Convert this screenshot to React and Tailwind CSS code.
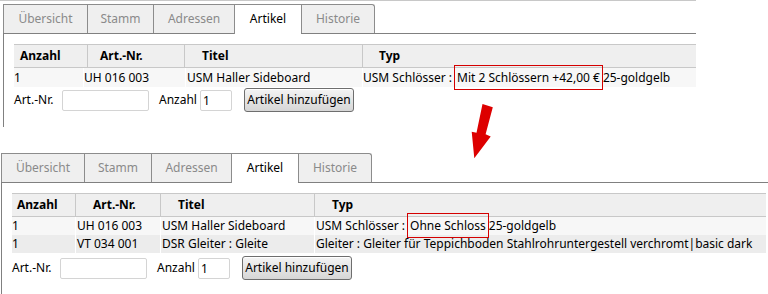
const tabNames = ["Übersicht", "Stamm", "Adressen", "Artikel", "Historie"];

function Tabs({ widths }) {
  return (
    <div className="flex h-[29px] items-start">
      {tabNames.map((name, i) => {
        const active = name === "Artikel";
        const last = i === tabNames.length - 1;
        return (
          <div
            key={name}
            style={{ width: widths[i] }}
            className={
              "flex items-center justify-center border-l border-t border-[#8c8c8c] " +
              (last ? "border-r rounded-tr-[3px] " : "") +
              (active
                ? "relative z-10 h-[30px] bg-white text-black"
                : "h-[29px] bg-[#efefef] text-[#8a8a8a]")
            }
          >
            <span className="-mt-px">{name}</span>
          </div>
        );
      })}
    </div>
  );
}

function Header({ cols }) {
  return (
    <div className="flex h-[24px] border-y border-[#c8c8c8] bg-[#efefef] font-bold">
      {cols.map((c, i) => (
        <div
          key={c.label}
          style={c.w ? { width: c.w, paddingLeft: c.p } : { paddingLeft: c.p }}
          className={
            "flex items-center " + (i > 0 ? "border-l border-[#c8c8c8] " : "") + (c.w ? "shrink-0" : "flex-1")
          }
        >
          {c.label}
        </div>
      ))}
    </div>
  );
}

function Row({ cells, widths, pads, bg, h }) {
  return (
    <div className={"flex " + bg} style={{ height: h }}>
      {cells.map((c, i) => (
        <div
          key={i}
          style={widths[i] ? { width: widths[i], paddingLeft: pads[i] } : { paddingLeft: pads[i] }}
          className={
            "flex items-center whitespace-nowrap " +
            (i > 0 ? "border-l border-white " : "") +
            (widths[i] ? "shrink-0" : "flex-1")
          }
        >
          {c}
        </div>
      ))}
    </div>
  );
}

function AddRow({ top }) {
  return (
    <div className={"flex items-center " + top}>
      <span className="w-[48px]">Art.-Nr.</span>
      <input className="h-[21px] w-[87px] rounded-[2px] border border-[#d4d4d4] bg-white" />
      <span className="ml-[10px] w-[41px]">Anzahl</span>
      <input
        defaultValue="1"
        className="h-[21px] w-[32px] rounded-[2px] border border-[#d4d4d4] bg-white px-[2px] text-[12px]"
      />
      <button className="ml-[12px] h-[24px] w-[110px] rounded-[3px] border border-[#6e6e6e] bg-gradient-to-b from-[#f4f4f4] to-[#d6d6d6] text-[12px] text-black shadow-[inset_0_1px_0_#fff]">
        Artikel hinzufügen
      </button>
    </div>
  );
}

function Box({ children }) {
  return (
    <span className="ml-[2px] border border-[#d40000] px-[2px] py-[3px]">{children}</span>
  );
}

export default function App() {
  return (
    <div className="relative h-[294px] w-[768px] overflow-hidden bg-white font-['Noto_Sans',Arial,sans-serif] text-[12px] leading-[16px] text-black">
      <div className="h-px w-[696px] bg-[#c8c8c8]" />

      {/* before */}
      <div className="ml-[3px] mt-[3px] w-[693px]">
        <Tabs widths={[84, 66, 81, 67, 74]} />
        <div className="h-[94px] border-l border-t border-[#808080] pl-[10px] pt-[10px]">
          <Header
            cols={[
              { label: "Anzahl", w: 73, p: 6 },
              { label: "Art.-Nr.", w: 97, p: 12 },
              { label: "Titel", w: 178, p: 17 },
              { label: "Typ", p: 16 },
            ]}
          />
          <Row
            h={19}
            bg="bg-[#f7f7f7]"
            widths={[69, 102, 177, null]}
            pads={[0, 0, 1, 0]}
            cells={[
              "1",
              "UH 016 003",
              "USM Haller Sideboard",
              <span>
                USM Schlösser :<Box>Mit 2 Schlössern +42,00 €</Box>25-goldgelb
              </span>,
            ]}
          />
          <AddRow top="mt-[1px]" />
        </div>
      </div>

      {/* after */}
      <div className="ml-px mt-[26px]">
        <Tabs widths={[83, 67, 80, 67, 74]} />
        <div className="h-[120px] border-l border-t border-[#808080] pl-[10px] pr-[2px] pt-[10px]">
          <Header
            cols={[
              { label: "Anzahl", w: 63, p: 5 },
              { label: "Art.-Nr.", w: 85, p: 17 },
              { label: "Titel", w: 154, p: 17 },
              { label: "Typ", p: 17 },
            ]}
          />
          <Row
            h={18}
            bg="bg-[#f7f7f7]"
            widths={[63, 85, 154, null]}
            pads={[0, 1, 1, 1]}
            cells={[
              "1",
              "UH 016 003",
              "USM Haller Sideboard",
              <span>
                USM Schlösser :<Box>Ohne Schloss</Box>25-goldgelb
              </span>,
            ]}
          />
          <Row
            h={18}
            bg="bg-[#ececec]"
            widths={[63, 85, 154, null]}
            pads={[0, 1, 1, 1]}
            cells={[
              "1",
              "VT 034 001",
              "DSR Gleiter : Gleite",
              "Gleiter : Gleiter für Teppichboden Stahlrohruntergestell verchromt|basic dark",
            ]}
          />
          <AddRow top="mt-[3px]" />
        </div>
      </div>

      <svg className="absolute left-[468px] top-[102px]" width="28" height="60" viewBox="0 0 28 60">
        <polygon
          points="14.5,2 24.8,5.3 17.6,32.3 22.7,34.6 6.3,56.3 3.7,29.7 8.5,30.7"
          fill="#dd0000"
        />
      </svg>
    </div>
  );
}
